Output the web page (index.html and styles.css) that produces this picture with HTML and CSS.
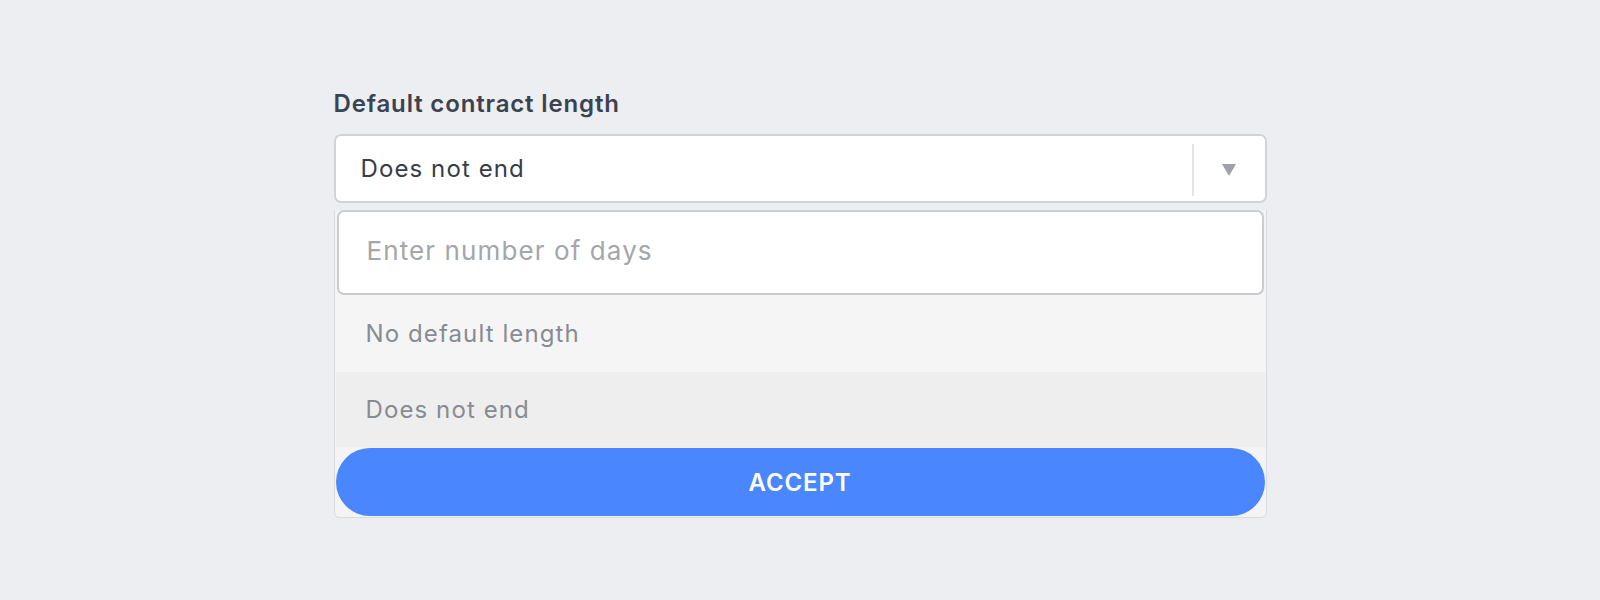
FILE: index.html
```html
<!DOCTYPE html>
<html lang="en">
<head>
<meta charset="utf-8">
<title>Default contract length</title>
<link rel="stylesheet" href="styles.css">
</head>
<body>
<div class="field">
  <div class="label">Default contract length</div>
  <div class="select">
    <div class="select-value">Does not end</div>
    <div class="select-sep"></div>
    <div class="select-arrow">
      <svg width="14" height="12" viewBox="0 0 14 12"><path d="M0 0 H14 L7 12 Z" fill="#9ea2a8"/></svg>
    </div>
  </div>
  <div class="panel">
    <div class="input">Enter number of days</div>
    <div class="option option-a">No default length</div>
    <div class="option option-b">Does not end</div>
    <div class="button-wrap">
      <div class="button">ACCEPT</div>
    </div>
  </div>
</div>
</body>
</html>
```

FILE: styles.css
```css
html, body {
  margin: 0;
  padding: 0;
}
body {
  background: #eceef2;
  font-family: Inter, "Noto Sans", sans-serif;
  width: 1600px;
  height: 600px;
}
.field {
  width: 933px;
  margin: 0 auto;
  padding-top: 89px;
}
.label {
  font-size: 24px;
  line-height: 30px;
  font-weight: 600;
  letter-spacing: 0.85px;
  color: #3b4250;
  margin-bottom: 15px;
}
.select {
  height: 69px;
  box-sizing: border-box;
  background: #fff;
  border: 2px solid #d2d3d7;
  border-radius: 7px;
  display: flex;
  align-items: stretch;
}
.select-value {
  flex: 1;
  display: flex;
  align-items: center;
  padding-left: 25px;
  font-size: 24px;
  letter-spacing: 1.1px;
  color: #363d49;
}
.select-sep {
  width: 2px;
  background: #e3e4e7;
  margin: 8px 0 5px;
}
.select-arrow {
  width: 71px;
  display: flex;
  align-items: center;
  justify-content: center;
  padding-top: 2px;
}
.panel {
  margin-top: 7px;
  box-sizing: border-box;
  border: 1px solid #d9dadd;
  border-top: none;
  border-radius: 0 0 6px 6px;
  background: #f4f4f5;
  padding: 0 1px 1px;
}
.input {
  margin: 0 1px;
  height: 85px;
  box-sizing: border-box;
  background: #fff;
  border: 2px solid #cbccd0;
  border-radius: 7px;
  display: flex;
  align-items: center;
  padding-left: 28px;
  padding-bottom: 4px;
  font-size: 26px;
  letter-spacing: 1.1px;
  color: #a4a6aa;
}
.option {
  display: flex;
  align-items: center;
  padding-left: 30px;
  font-size: 24px;
  letter-spacing: 1.1px;
  color: #888b91;
}
.option-a {
  height: 77px;
  background: #f5f5f5;
}
.option-b {
  height: 75px;
  background: #eeeeee;
}
.button-wrap {
  padding-top: 1px;
  background: #f4f4f4;
}
.button {
  height: 68px;
  border-radius: 34px;
  background: #4a86fd;
  color: #fff;
  font-size: 24px;
  font-weight: 600;
  letter-spacing: 0.85px;
  display: flex;
  align-items: center;
  justify-content: center;
}
```
